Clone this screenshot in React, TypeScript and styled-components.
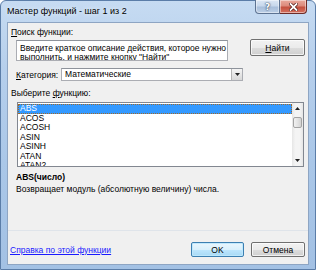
import React from 'react';
import styled, { createGlobalStyle } from 'styled-components';

const Global = createGlobalStyle`
  html, body { margin: 0; padding: 0; background: #ffffff; }
  body { width: 316px; height: 270px; overflow: hidden; }
`;

const Window = styled.div`
  box-sizing: border-box;
  width: 316px;
  height: 270px;
  display: flex;
  flex-direction: column;
  padding: 0 6px 4px 6px;
  border: 1px solid #5b7da8;
  border-radius: 6px 6px 0 0;
  background: linear-gradient(180deg, #c6dbf2 0%, #b6cfec 25%, #aac7e8 60%, #a3c1e4 100%);
  font-family: "Liberation Sans", Arial, sans-serif;
`;

const TitleBar = styled.div`
  height: 21px;
  flex-shrink: 0;
  display: flex;
  align-items: flex-start;
`;

const Title = styled.span`
  font-size: 9px;
  line-height: 21px;
  color: #000;
  text-shadow: 0 0 5px rgba(255, 255, 255, 0.9);
`;

const CaptionButtons = styled.div`
  margin-left: auto;
  margin-right: 2px;
  margin-top: -1px;
  display: flex;
`;

const CaptionButton = styled.div<{ $close?: boolean }>`
  box-sizing: border-box;
  width: ${(p) => (p.$close ? 27 : 25)}px;
  height: 14px;
  display: flex;
  align-items: center;
  justify-content: center;
  border: 1px solid ${(p) => (p.$close ? '#6e2b27' : '#5d7392')};
  border-top: none;
  ${(p) => (p.$close ? 'border-left: none;' : '')}
  border-radius: ${(p) => (p.$close ? '0 0 4px 0' : '0 0 0 4px')};
  background: ${(p) =>
    p.$close
      ? 'linear-gradient(180deg, #e9a99c 0%, #dc8a7c 45%, #c4503f 55%, #d5715f 100%)'
      : 'linear-gradient(180deg, #dce7f4 0%, #c8d8ec 45%, #a9bfdb 55%, #bccfe6 100%)'};
  box-shadow: inset 0 0 0 1px rgba(255, 255, 255, 0.45);
`;

const HelpGlyph = styled.span`
  font-family: "DejaVu Sans", sans-serif;
  font-weight: bold;
  font-size: 9px;
  line-height: 10px;
  color: #ffffff;
  text-shadow: 0 0 1px #2d3f58, 0 0 2px #2d3f58;
`;

const Client = styled.div`
  flex: 1;
  display: flex;
  flex-direction: column;
  background: #f0f0f0;
  border: 1px solid #8ea5c3;
  padding: 0 3px 0 2px;
  font-size: 8.5px;
  color: #000;
  min-height: 0;
`;

const Label = styled.div<{ $indent?: number; $top?: number }>`
  height: 12px;
  line-height: 12px;
  margin-left: ${(p) => p.$indent ?? 1}px;
  margin-top: ${(p) => p.$top ?? 0}px;
  white-space: nowrap;
`;

const Key = styled.span`
  text-decoration: underline;
`;

const SearchRow = styled.div`
  display: flex;
  align-items: flex-start;
  margin-top: 1px;
`;

const SearchBox = styled.div`
  box-sizing: border-box;
  width: 212px;
  height: 21px;
  margin-top: 1px;
  margin-left: 6px;
  padding: 3px 0 0 3px;
  background: #ffffff;
  border: 1px solid #abadb3;
  border-top-color: #8e939b;
  line-height: 8.5px;
  white-space: nowrap;
  overflow: hidden;
`;

const Button = styled.div<{ $default?: boolean; $w: number }>`
  box-sizing: border-box;
  width: ${(p) => p.$w}px;
  height: ${(p) => (p.$default !== undefined ? 15 : 17)}px;
  display: flex;
  align-items: center;
  justify-content: center;
  border: 1px solid ${(p) => (p.$default ? '#3c7fb1' : '#707070')};
  border-radius: 2px;
  background: ${(p) =>
    p.$default
      ? 'linear-gradient(180deg, #eaf6fd 0%, #d9f0fc 50%, #bee6fd 51%, #a7d9f5 100%)'
      : 'linear-gradient(180deg, #f2f2f2 0%, #ebebeb 50%, #dddddd 51%, #cfcfcf 100%)'};
  box-shadow: inset 0 0 0 1px ${(p) => (p.$default ? 'rgba(190,232,253,0.9)' : 'rgba(255,255,255,0.7)')};
  line-height: 10px;
`;

const FindButton = styled(Button)`
  margin-left: auto;
`;

const CategoryRow = styled.div`
  display: flex;
  align-items: center;
  height: 13px;
  margin-top: 7px;
`;

const CategoryLabel = styled.span`
  width: 45px;
  margin-left: 6px;
  white-space: nowrap;
`;

const Combo = styled.div`
  box-sizing: border-box;
  width: 182px;
  height: 13px;
  display: flex;
  align-items: stretch;
  background: #ffffff;
  border: 1px solid #abadb3;
  border-top-color: #8e939b;
`;

const ComboText = styled.span`
  flex: 1;
  padding-left: 3px;
  line-height: 11px;
`;

const ComboArrow = styled.div`
  box-sizing: border-box;
  width: 11px;
  display: flex;
  align-items: center;
  justify-content: center;
  border-left: 1px solid #b5b5b5;
  background: linear-gradient(180deg, #f4f4f4 0%, #e6e6e6 50%, #d8d8d8 100%);
`;

const ListBox = styled.div`
  box-sizing: border-box;
  height: 65px;
  margin-top: 3px;
  margin-left: 7px;
  margin-right: 1px;
  display: flex;
  background: #ffffff;
  border: 1px solid #828790;
  overflow: hidden;
`;

const Items = styled.div`
  flex: 1;
  padding-top: 1px;
  overflow: hidden;
`;

const Item = styled.div<{ $selected?: boolean }>`
  box-sizing: border-box;
  height: 9.5px;
  line-height: 9.5px;
  padding-left: 2px;
  white-space: nowrap;
  color: ${(p) => (p.$selected ? '#ffffff' : '#000000')};
  background: ${(p) => (p.$selected ? '#3399ff' : 'transparent')};
  outline: ${(p) => (p.$selected ? '1px dotted #a0692a' : 'none')};
  outline-offset: -1px;
`;

const ScrollBar = styled.div`
  width: 11px;
  display: flex;
  flex-direction: column;
  background: linear-gradient(90deg, #e6e6e6 0%, #f4f4f4 30%, #f4f4f4 70%, #e6e6e6 100%);
`;

const ScrollArrow = styled.div`
  height: 11px;
  display: flex;
  align-items: center;
  justify-content: center;
`;

const ScrollTrack = styled.div`
  flex: 1;
  padding-top: 3px;
`;

const Thumb = styled.div`
  box-sizing: border-box;
  height: 11px;
  margin: 0 1px;
  border: 1px solid #a3a3a3;
  border-radius: 2px;
  background: linear-gradient(90deg, #f1f1f1 0%, #e4e4e4 50%, #d3d3d3 100%);
`;

const Signature = styled.div`
  margin-top: 4px;
  margin-left: 6px;
  height: 12px;
  line-height: 12px;
  font-weight: bold;
`;

const Description = styled.div`
  margin-left: 6px;
  height: 12px;
  line-height: 12px;
`;

const Separator = styled.div`
  margin-top: auto;
  margin-left: -2px;
  margin-right: -3px;
  height: 1px;
  background: #dfe4ea;
`;

const Footer = styled.div`
  display: flex;
  align-items: center;
  height: 15px;
  margin-top: 11px;
  margin-bottom: 7px;
  gap: 7px;
`;

const HelpLink = styled.span`
  color: #1a1aff;
  text-decoration: underline;
  margin-right: auto;
`;

const Tri = ({ up }: { up?: boolean }) => (
  <svg width="5" height="3" viewBox="0 0 5 3">
    <path d={up ? 'M2.5 0 L5 3 L0 3 Z' : 'M0 0 L5 0 L2.5 3 Z'} fill="#222" />
  </svg>
);

const functions = ['ABS', 'ACOS', 'ACOSH', 'ASIN', 'ASINH', 'ATAN', 'ATAN2'];

export default function App() {
  return (
    <>
      <Global />
      <Window>
        <TitleBar>
          <Title>Мастер функций - шаг 1 из 2</Title>
          <CaptionButtons>
            <CaptionButton>
              <HelpGlyph>?</HelpGlyph>
            </CaptionButton>
            <CaptionButton $close>
              <svg width="9" height="8" viewBox="0 0 9 8">
                <path d="M1.5 1 L7.5 7 M7.5 1 L1.5 7" stroke="#4a1410" strokeWidth="3.2" strokeLinecap="square" />
                <path d="M1.5 1 L7.5 7 M7.5 1 L1.5 7" stroke="#ffffff" strokeWidth="1.8" strokeLinecap="square" />
              </svg>
            </CaptionButton>
          </CaptionButtons>
        </TitleBar>
        <Client>
          <Label $top={3}>
            <Key>П</Key>оиск функции:
          </Label>
          <SearchRow>
            <SearchBox>
              Введите краткое описание действия, которое нужно
              <br />
              выполнить, и нажмите кнопку "Найти"
            </SearchBox>
            <FindButton $w={55}>
              <span>
                <Key>Н</Key>айти
              </span>
            </FindButton>
          </SearchRow>
          <CategoryRow>
            <CategoryLabel>
              <Key>К</Key>атегория:
            </CategoryLabel>
            <Combo>
              <ComboText>Математические</ComboText>
              <ComboArrow>
                <Tri />
              </ComboArrow>
            </Combo>
          </CategoryRow>
          <Label $top={6}>
            Выберите <Key>ф</Key>ункцию:
          </Label>
          <ListBox>
            <Items>
              {functions.map((f, i) => (
                <Item key={f} $selected={i === 0}>
                  {f}
                </Item>
              ))}
            </Items>
            <ScrollBar>
              <ScrollArrow>
                <Tri up />
              </ScrollArrow>
              <ScrollTrack>
                <Thumb />
              </ScrollTrack>
              <ScrollArrow>
                <Tri />
              </ScrollArrow>
            </ScrollBar>
          </ListBox>
          <Signature>ABS(число)</Signature>
          <Description>Возвращает модуль (абсолютную величину) числа.</Description>
          <Separator />
          <Footer>
            <HelpLink>Справка по этой функции</HelpLink>
            <Button $w={53} $default>
              OK
            </Button>
            <Button $w={54} $default={false}>
              Отмена
            </Button>
          </Footer>
        </Client>
      </Window>
    </>
  );
}
